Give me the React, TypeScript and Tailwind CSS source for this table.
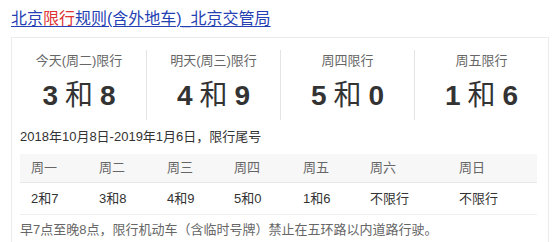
import React from "react";

const cards = [
  { label: "今天(周二)限行", a: "3", b: "8" },
  { label: "明天(周三)限行", a: "4", b: "9" },
  { label: "周四限行", a: "5", b: "0" },
  { label: "周五限行", a: "1", b: "6" },
];

const week = [
  { day: "周一", nums: "2和7" },
  { day: "周二", nums: "3和8" },
  { day: "周三", nums: "4和9" },
  { day: "周四", nums: "5和0" },
  { day: "周五", nums: "1和6" },
  { day: "周六", nums: "不限行" },
  { day: "周日", nums: "不限行" },
];

const font = "font-['Arial','Liberation_Sans','Noto_Sans_CJK_SC',sans-serif]";
const cols = "grid grid-cols-[68px_68px_67px_69px_67px_89px_1fr] pl-[11px]";

export default function App() {
  return (
    <div className={`w-[560px] h-[242px] overflow-hidden bg-white ${font}`}>
      <div className="pl-[11px] pt-[7px] h-[37px]">
        <a className="text-[16px] leading-[20px] text-[#2440b3] underline underline-offset-[2px] decoration-1 cursor-pointer">
          北京<span className="text-[#dd3333]">限行</span>规则(含外地车)_北京交管局
        </a>
      </div>

      <div className="ml-[11px] w-[538px] border border-[#ececec] border-b-0 h-[220px]">
        <div className="flex pt-[12px] h-[82px]">
          {cards.map((c, i) => (
            <div
              key={c.label}
              className={`w-[134px] flex flex-col items-center ${i > 0 ? "border-l border-[#e4e4e4]" : ""}`}
            >
              <div className="text-[13px] leading-[20px] text-[#666] mt-[1px]">{c.label}</div>
              <div className="text-[28px] leading-[40px] text-[#333] mt-[5px]">
                <span className="font-bold">{c.a}</span>
                <span className="mx-[7px]">和</span>
                <span className="font-bold">{c.b}</span>
              </div>
            </div>
          ))}
        </div>

        <div className="px-[8px] pt-[8px]">
          <div className="text-[13px] leading-[18px] text-[#333]">
            2018年10月8日-2019年1月6日，限行尾号
          </div>

          <div className="mt-[8px] w-[517px] text-[13px]">
            <div className={`${cols} bg-[#f7f7f7] h-[29px] items-center text-[#666] border-b border-[#e8e8e8]`}>
              {week.map((w) => (
                <div key={w.day}>{w.day}</div>
              ))}
            </div>
            <div className={`${cols} h-[32px] items-center text-[#333] border-b border-[#efefef]`}>
              {week.map((w) => (
                <div key={w.day}>{w.nums}</div>
              ))}
            </div>
          </div>

          <div className="mt-[6px] text-[13px] leading-[18px] text-[#666]">
            早7点至晚8点，限行机动车（含临时号牌）禁止在五环路以内道路行驶。
          </div>
        </div>
      </div>
    </div>
  );
}
